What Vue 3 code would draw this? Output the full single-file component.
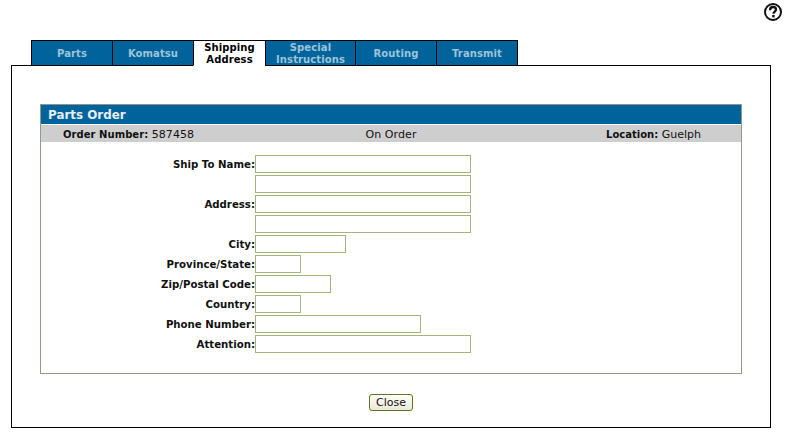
<script setup>
const tabs = [
  { label: 'Parts', w: 81 },
  { label: 'Komatsu', w: 81 },
  { label: 'Shipping Address', w: 72, active: true },
  { label: 'Special Instructions', w: 90 },
  { label: 'Routing', w: 81 },
  { label: 'Transmit', w: 82 }
]
const fields = [
  { label: 'Ship To Name:', w: 216 },
  { label: '', w: 216 },
  { label: 'Address:', w: 216 },
  { label: '', w: 216 },
  { label: 'City:', w: 91 },
  { label: 'Province/State:', w: 46 },
  { label: 'Zip/Postal Code:', w: 76 },
  { label: 'Country:', w: 46 },
  { label: 'Phone Number:', w: 166 },
  { label: 'Attention:', w: 216 }
]
</script>

<template>
  <div class="page">
    <div class="help">
      <svg width="20" height="20" viewBox="0 0 20 20">
        <circle cx="10" cy="10" r="8" fill="#fff" stroke="#111" stroke-width="2" />
        <path d="M7 8.2 C7 5.9 8.5 5 10 5 C11.8 5 13 6.1 13 7.6 C13 9.5 10.5 9.7 10.5 11.8" fill="none" stroke="#111" stroke-width="2.3" />
        <rect x="9.2" y="13" width="2.4" height="2.4" fill="#111" />
      </svg>
    </div>
    <div class="tabs">
      <div
        v-for="t in tabs"
        :key="t.label"
        class="tab"
        :class="{ active: t.active }"
        :style="{ width: t.w + 'px' }"
      >{{ t.label }}</div>
    </div>
    <div class="panel">
      <div class="card">
        <div class="title">Parts Order</div>
        <div class="info">
          <div class="info-left"><b>Order Number:</b> 587458</div>
          <div class="info-mid">On Order</div>
          <div class="info-right"><b>Location:</b> Guelph</div>
        </div>
        <div class="form">
          <template v-for="(f, i) in fields" :key="i">
            <label class="lbl">{{ f.label }}</label>
            <input class="inp" type="text" :style="{ width: f.w + 'px' }" />
          </template>
        </div>
      </div>
      <div class="actions">
        <button class="close" type="button">Close</button>
      </div>
    </div>
  </div>
</template>

<style>
html, body { margin: 0; background: #fff; }
</style>

<style scoped>
.page {
  width: 786px;
  height: 445px;
  box-sizing: border-box;
  overflow: hidden;
  position: relative;
  background: #fff;
  font-family: "DejaVu Sans", Verdana, sans-serif;
  font-size: 11px;
  color: #111;
  padding-top: 40px;
}
.help {
  position: absolute;
  top: 2px;
  right: 3px;
  width: 20px;
  height: 20px;
}
.tabs {
  display: flex;
  margin-left: 31px;
  height: 26px;
  position: relative;
  z-index: 1;
}
.tab {
  box-sizing: border-box;
  height: 26px;
  background: #00639c;
  border: 1px solid #000;
  border-right: none;
  color: #9dc3d8;
  font-weight: bold;
  font-size: 10px;
  letter-spacing: 0.1px;
  line-height: 12px;
  text-align: center;
  display: flex;
  align-items: center;
  justify-content: center;
  padding: 2px 2px 0;
}
.tab:last-child { border-right: 1px solid #000; }
.tab.active {
  background: #fff;
  color: #000;
  border-bottom: 1px solid #fff;
}
.panel {
  box-sizing: border-box;
  margin: -1px 0 0 11px;
  width: 760px;
  height: 363px;
  border: 1px solid #000;
  padding: 38px 28px 0;
}
.card {
  box-sizing: border-box;
  width: 702px;
  height: 270px;
  border: 1px solid #8f9a8a;
  border-top-color: #909090;
}
.title {
  height: 19px;
  background: #00639c;
  color: #e6eff5;
  font-weight: bold;
  font-size: 11.9px;
  line-height: 21px;
  padding-left: 7px;
}
.info {
  display: grid;
  grid-template-columns: 1fr 1fr 1fr;
  height: 17px;
  margin-top: 1px;
  line-height: 19px;
  background: #cecece;
  color: #111;
  padding: 0 40px 0 22px;
}
.info b { font-size: 10px; }
.info-left { letter-spacing: 0.05px; }
.info-mid { text-align: center; padding-left: 18px; letter-spacing: 0.1px; }
.info-right { text-align: right; }
.form {
  display: grid;
  grid-template-columns: 214px 1fr;
  row-gap: 2px;
  margin-top: 13px;
  align-items: center;
}
.lbl {
  text-align: right;
  font-weight: bold;
  font-size: 10.2px;
  padding-top: 1px;
}
.inp {
  box-sizing: border-box;
  height: 18px;
  margin: 0;
  padding: 0 2px;
  background: #fff;
  border: 1px solid #a3b578;
  border-radius: 0;
  outline: none;
}
.actions {
  display: flex;
  justify-content: center;
  margin-top: 20px;
}
.close {
  box-sizing: border-box;
  width: 44px;
  height: 17px;
  padding: 0;
  border: 1px solid #5a7a1c;
  border-radius: 3px;
  background: linear-gradient(#fffef8, #ece8d8);
  font-family: "DejaVu Sans", Verdana, sans-serif;
  font-size: 11px;
  line-height: 15px;
  color: #111;
}
</style>
